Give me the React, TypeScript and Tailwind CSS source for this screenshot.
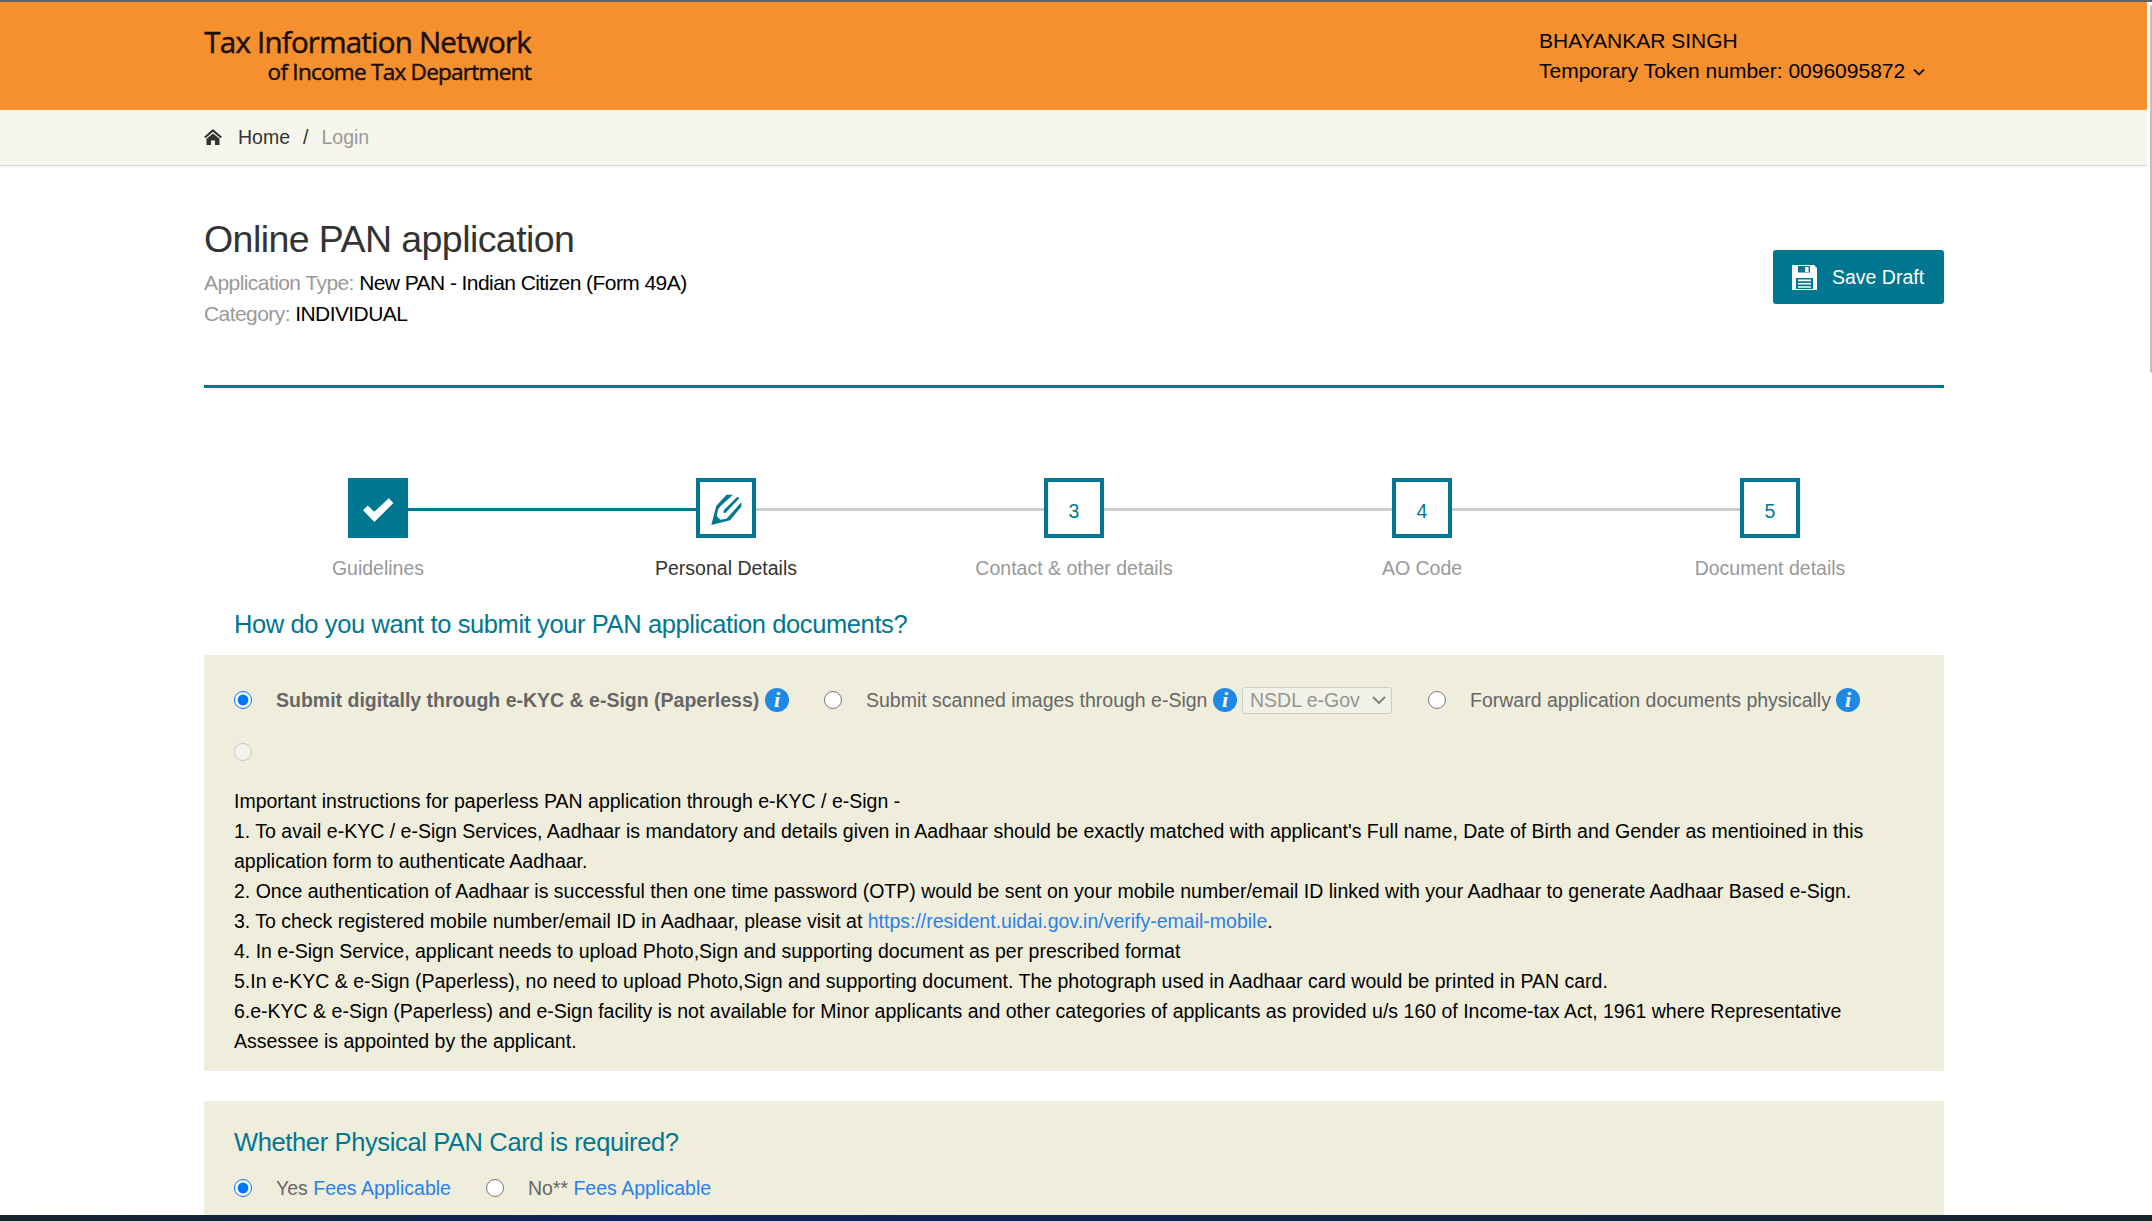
import type { ReactNode } from "react";

function HomeIcon() {
  return (
    <svg width="18" height="16" viewBox="0 0 18 16" className="shrink-0">
      <path d="M0.8 8.4 9 1.4l8.2 7" fill="none" stroke="#333" strokeWidth="2" />
      <path d="M2.5 9.8 9 4.4l6.5 5.4V16H11v-4.4H7V16H2.5z" fill="#333" />
    </svg>
  );
}

function FloppyIcon() {
  return (
    <svg width="25" height="25" viewBox="0 0 25 25" className="shrink-0">
      <path d="M0 0h22l3 3v22H0z" fill="#fff" />
      <path d="M6 1h12v6.5H6zM4 13h17v11H4z" fill="#007791" />
      <path d="M13.2 2h3.4v5h-3.4zM6 14.6h13v1.6H6zM6 18h13v1.6H6zM6 21.2h13v1.6H6z" fill="#fff" />
    </svg>
  );
}

function CheckIcon() {
  return (
    <svg width="60" height="60" viewBox="0 0 60 60" className="-m-1 shrink-0">
      <path d="M15 32.3 19.8 27.6 26.3 33.8 40.8 20.2 45.4 25 26.4 44z" fill="#fff" />
    </svg>
  );
}

function PencilIcon() {
  return (
    <svg width="60" height="60" viewBox="18 24 180 180" className="-m-1 shrink-0" fill="#007791">
      <path d="M64 165 79 107 110 74h19L91 109l-7 10-4 19 11 11 18-3 9-9 36-40v13l-34 41z" />
      <path d="m142 80 6 5-42 44-6-1 2-8z" />
    </svg>
  );
}

function InfoIcon({ className = "" }: { className?: string }) {
  return (
    <span
      className={`flex size-6 shrink-0 items-center justify-center rounded-full bg-[#1e88e5] font-['Liberation_Serif',serif] text-[22px] leading-none font-bold text-white italic ${className}`}
    >
      i
    </span>
  );
}

function Radio({ name, checked, disabled, className = "" }: { name: string; checked?: boolean; disabled?: boolean; className?: string }) {
  return <input type="radio" name={name} defaultChecked={checked} disabled={disabled} className={`size-[18px] shrink-0 ${className}`} />;
}

const steps: { label: string; icon: ReactNode; state: "done" | "active" | "todo" }[] = [
  { label: "Guidelines", icon: <CheckIcon />, state: "done" },
  { label: "Personal Details", icon: <PencilIcon />, state: "active" },
  { label: "Contact & other details", icon: "3", state: "todo" },
  { label: "AO Code", icon: "4", state: "todo" },
  { label: "Document details", icon: "5", state: "todo" },
];

function Stepper() {
  return (
    <div className="mt-[90px] grid h-[112px] grid-cols-5">
      {steps.map((s, i) => (
        <div key={s.label} className="flex flex-col items-center">
          <div className="flex w-full items-center">
            <div className={`mt-[3px] h-[3px] flex-1 ${i === 0 ? "bg-transparent" : i === 1 ? "bg-[#007791]" : "bg-[#ccc]"}`} />
            <div
              className={`flex size-[60px] items-center justify-center border-4 border-[#007791] text-[#007791] ${s.state === "done" ? "bg-[#007791]" : "bg-white"}`}
            >
              {typeof s.icon === "string" ? <span className="pt-[5px]">{s.icon}</span> : s.icon}
            </div>
            <div className={`mt-[3px] h-[3px] flex-1 ${i === 4 ? "bg-transparent" : i === 0 ? "bg-[#007791]" : "bg-[#ccc]"}`} />
          </div>
          <div className={`mt-[15px] ${s.state === "active" ? "text-[#333]" : "text-[#999]"}`}>{s.label}</div>
        </div>
      ))}
    </div>
  );
}

export default function App() {
  return (
    <div className="flex h-[1221px] flex-col overflow-hidden bg-white font-['Liberation_Sans',Arial,sans-serif] text-[19.5px] leading-[30px] whitespace-nowrap text-black">
      <div className="h-[2px] shrink-0 bg-[#5f6368]" />
      <div className="flex min-h-0 flex-1">
        <div className="min-w-0 flex-1 overflow-hidden">
          <header className="h-[108px] border-b border-[#fd9a38] bg-[#f68f2e]">
            <div className="ml-[204px] flex w-[1740px] justify-between">
              <div className="mt-[23px] flex w-[327px] flex-col items-end font-['Open_Sans',sans-serif] font-medium text-[#1a1005] [-webkit-text-stroke:0.5px_#1a1005]">
                <div className="text-[29.5px] leading-[34px] tracking-[-0.77px]">Tax Information Network</div>
                <div className="text-[22.5px] leading-[26px] tracking-[-0.73px]">of Income Tax Department</div>
              </div>
              <div className="mt-6 w-[405px] text-[21px]">
                <div>BHAYANKAR SINGH</div>
                <div className="flex items-center">
                  Temporary Token number: 0096095872
                  <svg width="12" height="8" viewBox="0 0 12 8" className="mt-[2px] ml-2">
                    <path d="M1 1.5 6 6.5l5-5" fill="none" stroke="#111" strokeWidth="1.8" />
                  </svg>
                </div>
              </div>
            </div>
          </header>

          <nav className="h-14 border-b border-[#d9dcdc] bg-[#f6f6ed] shadow-[0_1px_2px_rgba(0,0,0,0.05)]">
            <div className="ml-[204px] flex items-center pt-3 text-[#333]">
              <HomeIcon />
              <span className="ml-4">Home</span>
              <span className="ml-[13px]">/</span>
              <span className="ml-[13px] text-[#999]">Login</span>
            </div>
          </nav>

          <main className="ml-[204px] w-[1740px]">
            <div className="flex h-[222px] justify-between border-b-[3px] border-[#007791]">
              <div className="pt-[51px] text-[21px] tracking-[-0.57px]">
                <h1 className="mb-[6px] text-[37.5px] leading-[44px] tracking-[-0.57px] text-[#333]">Online PAN application</h1>
                <div className="leading-[31px]">
                  <span className="text-[#999]">Application Type:</span> New PAN - Indian Citizen (Form 49A)
                </div>
                <div className="leading-[31px]">
                  <span className="text-[#999]">Category:</span> INDIVIDUAL
                </div>
              </div>
              <button className="mt-[84px] flex h-[54px] w-[171px] items-center rounded-[3px] bg-[#007791] pl-[19px] text-white">
                <FloppyIcon />
                <span className="ml-[15px]">Save Draft</span>
              </button>
            </div>

            <Stepper />

            <h2 className="mt-[19px] pl-[30px] text-[25.5px] leading-[30px] tracking-[-0.39px] text-[#007791]">
              How do you want to submit your PAN application documents?
            </h2>

            <section className="mt-4 h-[416px] bg-[#efeedd] px-[30px] pt-[30px]">
              <div className="flex h-[30px] items-center text-[#666]">
                <Radio name="mode" checked />
                <span className="ml-6 w-[489px] font-bold">Submit digitally through e-KYC &amp; e-Sign (Paperless)</span>
                <InfoIcon />
                <Radio name="mode" className="ml-[35px]" />
                <span className="ml-6 w-[347px]">Submit scanned images through e-Sign</span>
                <InfoIcon />
                <div className="ml-[5px] flex h-[27px] w-[150px] items-center rounded-[3px] border border-[#cfcfc3] bg-[#f2f1e8] pl-[7px] text-[#959590]">
                  <span className="w-[122px]">NSDL e-Gov</span>
                  <svg width="14" height="9" viewBox="0 0 14 9">
                    <path d="m1 1 6 6 6-6" fill="none" stroke="#858580" strokeWidth="2" />
                  </svg>
                </div>
                <Radio name="mode" className="ml-9" />
                <span className="ml-6 w-[366px]">Forward application documents physically</span>
                <InfoIcon />
              </div>
              <div className="mt-[22px] flex h-[30px] items-center">
                <Radio name="mode" disabled />
              </div>
              <div className="mt-[19px]">
                <p>Important instructions for paperless PAN application through e-KYC / e-Sign -</p>
                <p>
                  1. To avail e-KYC / e-Sign Services, Aadhaar is mandatory and details given in Aadhaar should be exactly matched with
                  applicant's Full name, Date of Birth and Gender as mentioined in this
                  <br />
                  application form to authenticate Aadhaar.
                </p>
                <p>
                  2. Once authentication of Aadhaar is successful then one time password (OTP) would be sent on your mobile number/email ID
                  linked with your Aadhaar to generate Aadhaar Based e-Sign.
                </p>
                <p>
                  3. To check registered mobile number/email ID in Aadhaar, please visit at{" "}
                  <a className="text-[#2a80eb]">https://resident.uidai.gov.in/verify-email-mobile</a>.
                </p>
                <p>4. In e-Sign Service, applicant needs to upload Photo,Sign and supporting document as per prescribed format</p>
                <p>
                  5.In e-KYC &amp; e-Sign (Paperless), no need to upload Photo,Sign and supporting document. The photograph used in Aadhaar
                  card would be printed in PAN card.
                </p>
                <p>
                  6.e-KYC &amp; e-Sign (Paperless) and e-Sign facility is not available for Minor applicants and other categories of
                  applicants as provided u/s 160 of Income-tax Act, 1961 where Representative
                  <br />
                  Assessee is appointed by the applicant.
                </p>
              </div>
            </section>

            <section className="mt-[30px] h-[200px] bg-[#efeedd] px-[30px] pt-[26px]">
              <h2 className="text-[25.5px] leading-[30px] tracking-[-0.37px] text-[#007791]">Whether Physical PAN Card is required?</h2>
              <div className="mt-4 flex h-[30px] items-center text-[#666]">
                <Radio name="card" checked />
                <span className="ml-6">
                  Yes <a className="text-[#2a80eb]">Fees Applicable</a>
                </span>
                <Radio name="card" className="ml-[35px]" />
                <span className="ml-6">
                  No** <a className="text-[#2a80eb]">Fees Applicable</a>
                </span>
              </div>
            </section>
          </main>
        </div>
        <div className="flex w-[5px] shrink-0 justify-end bg-white">
          <div className="mt-[3px] h-[368px] w-[2px] rounded-l-sm bg-[#c1c1c1]" />
        </div>
      </div>
      <div className="h-[6px] shrink-0 bg-linear-to-r from-[#17232b] via-[#10235c] via-30% to-[#17232b]" />
    </div>
  );
}
